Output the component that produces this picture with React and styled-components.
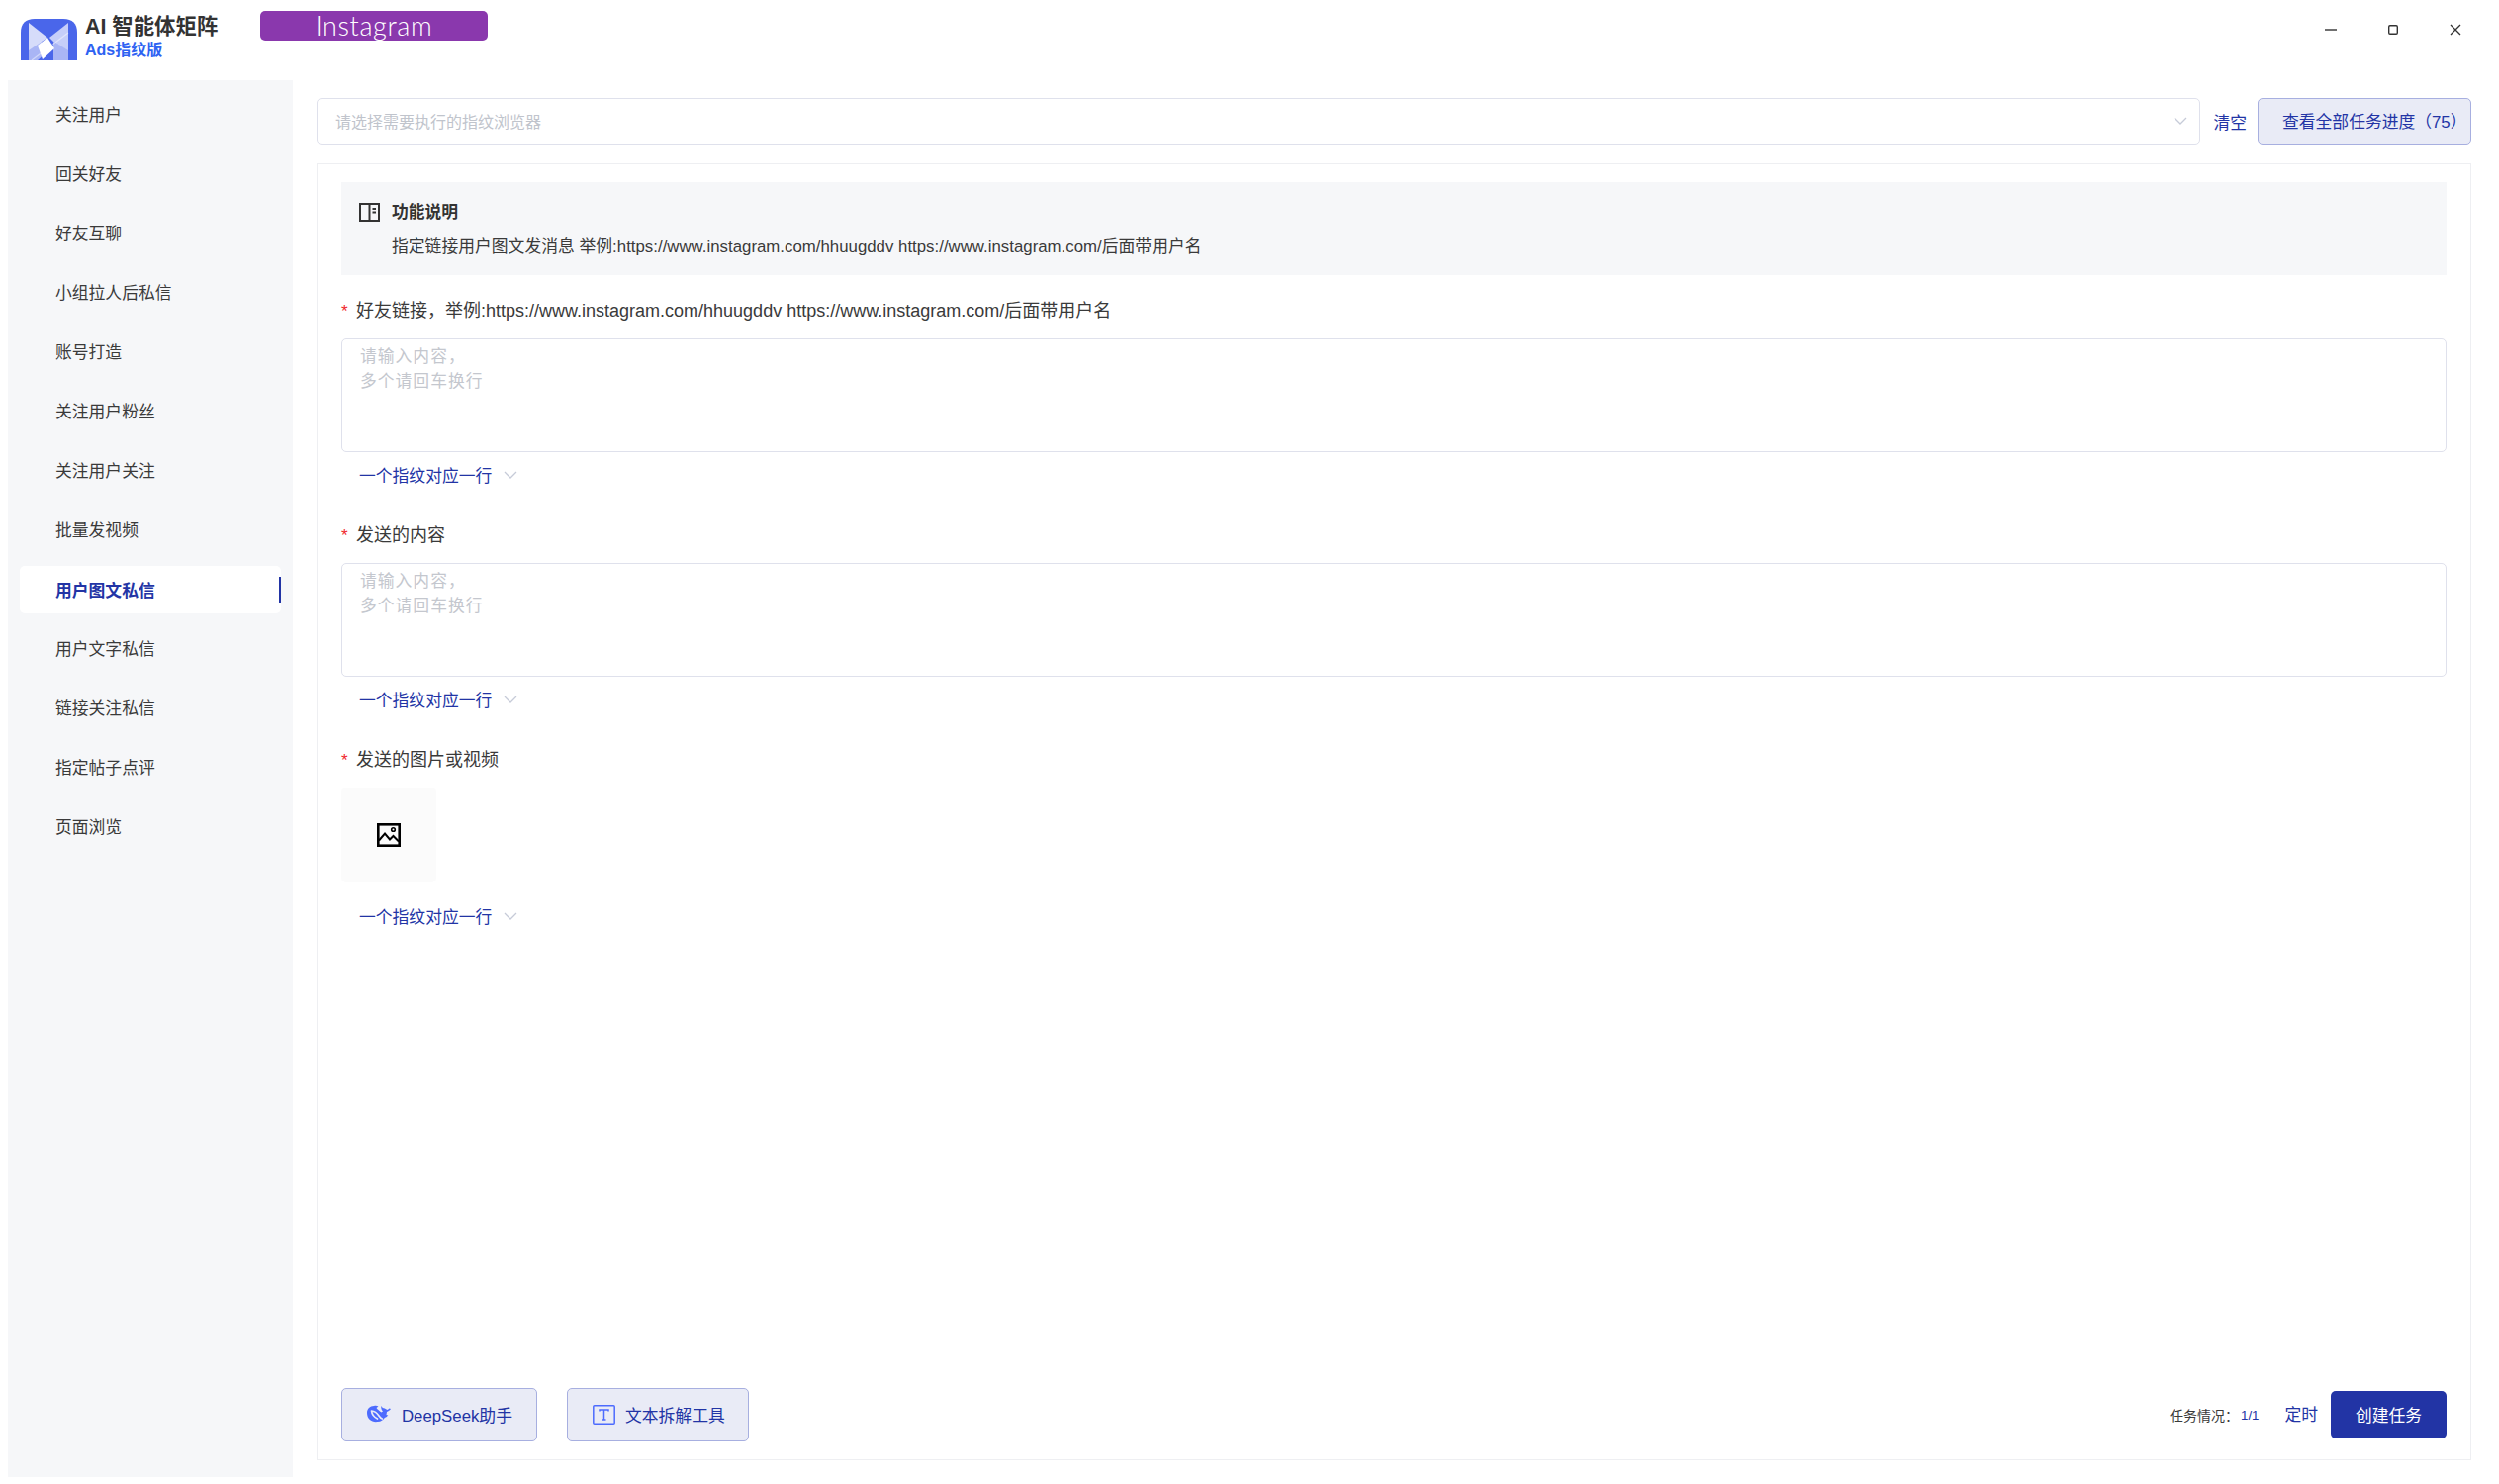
import React from "react";
import styled, { createGlobalStyle } from "styled-components";

const FONT = `"Liberation Sans", "Noto Sans CJK SC", sans-serif`;
const BLUE = "#2234a5";

const Global = createGlobalStyle`
  html, body { margin: 0; padding: 0; background: #fff; }
  * { box-sizing: border-box; }
  body { font-family: ${FONT}; color: #3a3a3a; }
`;

const Page = styled.div`
  width: 2526px; height: 1500px; overflow: hidden; display: flex; flex-direction: column; background: #fff;
`;
const Header = styled.header`
  height: 81px; flex: none; display: flex; align-items: flex-start;
`;
const Brand = styled.div`
  margin: 12px 0 0 21px; width: 242px; display: flex; gap: 8px; height: 49px; overflow: hidden;
`;
const LogoBox = styled.div`
  width: 57px; height: 49px; padding-top: 7px; flex: none; overflow: hidden;
`;
const BrandText = styled.div`
  display: flex; flex-direction: column;
`;
const BrandTitle = styled.div`
  font-size: 21.4px; font-weight: 700; line-height: 28px; color: #333; margin-top: 1px; white-space: nowrap;
`;
const BrandSub = styled.div`
  font-size: 16px; font-weight: 700; line-height: 19px; color: #2e62f2; white-space: nowrap;
`;
const PlatformBadge = styled.div`
  margin-top: 11px; width: 230px; height: 30px; border-radius: 5px; background: #8a38ad; color: #fff;
  font-family: "Lato", sans-serif; font-weight: 300; font-size: 27px; line-height: 29px; text-align: center; letter-spacing: .6px;
`;
const WindowControls = styled.div`
  margin-left: auto; margin-right: 38px; margin-top: 24px; display: flex; align-items: center; gap: 51px; color: #333;
`;
const WinIcon = styled.svg`
  width: 12px; height: 12px; display: block; fill: none; stroke: #333; stroke-width: 1.4;
`;
const Body = styled.div`
  flex: 1; display: flex; min-height: 0;
`;
const Sidebar = styled.nav`
  margin: 0 0 7px 8px; width: 288px; flex: none; background: #f6f7f9; padding: 10px 12px 0; display: flex; flex-direction: column; gap: 12px;
`;
const NavItem = styled.div`
  position: relative; height: 48px; padding-left: 36px; display: flex; align-items: center; font-size: 16.8px;
  border-radius: 5px; color: ${p => (p.$active ? BLUE : "#3a3a3a")}; font-weight: ${p => (p.$active ? 700 : 400)};
  background: ${p => (p.$active ? "#fff" : "transparent")};
  ${p => p.$active && `margin: 1px 0 -1px; &::after { content: ""; position: absolute; right: 0; top: 11px; width: 2px; height: 26px; background: ${BLUE}; }`}
`;
const Main = styled.main`
  flex: 1; min-width: 0; padding: 18px 28px 24px 24px; display: flex; flex-direction: column; gap: 18px;
`;
const TopBar = styled.div`
  height: 48px; flex: none; display: flex; align-items: center;
`;
const SelectBox = styled.div`
  flex: 1; height: 48px; border: 1px solid #dfe1ec; border-radius: 5px; display: flex; align-items: center; justify-content: space-between;
  padding: 0 12px 3px 18px; font-size: 16px; color: #c0c4cc;
`;
const Chevron = styled.svg`
  width: 14px; height: 14px; fill: none; stroke: #c6cbd8; stroke-width: 1.3; display: block; flex: none;
`;
const ClearLink = styled.span`
  margin: 0 11px 0 13px; font-size: 16.8px; color: ${BLUE};
`;
const SoftButton = styled.div`
  height: ${p => p.$h || 48}px; width: ${p => p.$w}px; flex: none; background: #e9ebf6; border: 1px solid #a7afe0; border-radius: 5px;
  display: flex; align-items: center; padding-left: ${p => p.$pl}px; padding-bottom: ${p => p.$pb || 0}px; gap: ${p => p.$gap || 0}px; font-size: 16.8px; color: ${BLUE}; white-space: nowrap;
`;
const Card = styled.section`
  flex: 1; min-height: 0; border: 1px solid #eeeff2; padding: 18px 24px 18px 24px; display: flex; flex-direction: column;
`;
const Info = styled.div`
  height: 94px; flex: none; background: #f6f7f9; padding: 19px 18px; font-size: 16.8px;
`;
const InfoTitle = styled.div`
  display: flex; align-items: center; gap: 12px; font-weight: 700; height: 24px; line-height: 24px; color: #333;
`;
const InfoIcon = styled.svg`
  width: 21px; height: 21px; display: block; flex: none; fill: none; stroke: #333; stroke-width: 2; margin-top: -2px;
`;
const InfoText = styled.div`
  margin: 11px 0 0 33px; line-height: 24px; letter-spacing: .02px; white-space: nowrap;
`;
const Field = styled.div`
  display: flex; flex-direction: column;
`;
const Label = styled.div`
  height: 28px; margin-top: ${p => p.$top}px; display: flex; align-items: center; font-size: 18px; color: #3a3a3a; white-space: nowrap;
`;
const Star = styled.span`
  color: #f0262d; font-size: 17px; width: 15px; padding-top: 5px;
`;
const TextArea = styled.div`
  margin-top: 16px; height: 115px; border: 1px solid #dfe1ec; border-radius: 5px; padding: 5px 18px; font-size: 16.8px; line-height: 25px;
  letter-spacing: 1px; color: #c4c7ce; white-space: pre-line;
`;
const Upload = styled.div`
  margin-top: 16px; width: 96px; height: 96px; background: #fbfbfb; border-radius: 5px; display: flex; align-items: center; justify-content: center;
`;
const ModeRow = styled.div`
  margin: ${p => p.$top || 11}px 0 0 18px; height: 24px; display: flex; align-items: center; gap: 12px; font-size: 16.8px; color: ${BLUE};
`;
const Footer = styled.div`
  margin-top: auto; height: 54px; flex: none; display: flex; align-items: center;
`;
const ToolGroup = styled.div`
  display: flex; gap: 30px;
`;
const Status = styled.div`
  margin-left: auto; display: flex; align-items: center; font-size: 14px; color: #3a3a3a; white-space: nowrap; padding-top: 0;
`;
const StatusValue = styled.span`
  color: ${BLUE}; margin-left: 2px; font-size: 13.2px;
`;
const TimerLink = styled.span`
  margin: 0 13px 0 26px; font-size: 16.8px; color: ${BLUE}; padding-bottom: 2px;
`;
const CreateButton = styled.div`
  width: 117px; height: 48px; border-radius: 5px; background: ${BLUE}; color: #fff; font-size: 16.8px; padding-bottom: 1px; display: flex; align-items: center; justify-content: center;
`;

const ChevronIcon = () => (
  <Chevron viewBox="0 0 14 14"><path d="M1 4l6 6 6-6" /></Chevron>
);

const Logo = () => (
  <svg width="57" height="42" viewBox="0 0 57 42" style={{ display: "block" }}>
    <path d="M0 14 Q0 0 14 0 H43 Q57 0 57 14 V42 H0Z" fill="#4a66ea" />
    <path d="M8 29 L20 22 L27 33 L17 42 H8Z" fill="#a9b5f5" />
    <path d="M33 23 L48 31 V42 H33Z" fill="#a9b5f5" />
    <path d="M8 4 L27 19 L8 32Z" fill="#d6dcfa" />
    <path d="M48 4 L29 19 L33 23 L48 32Z" fill="#c6cef9" />
    <path d="M17 27 L27 19 L34 30 L22 41Z" fill="#ffffff" />
    <path d="M11 42 L48 14" stroke="#fff" strokeOpacity=".45" strokeWidth="1.3" />
  </svg>
);

const DeepSeekIcon = () => (
  <svg width="26" height="20" viewBox="0 0 26 20" style={{ display: "block" }}>
    <path fill="#4d6bfe" d="M1 8C1 4 4 1 8 1c2-.4 3-.2 4.500.4L10.500 3c1 1.500 3 3 5 4.500l1.500-1c-1.300-1.300-2-3-1.700-5.500l1.500 2 2 .5c1 .5 1.700 1.200 2.500 1.500.8-.2 1.500-.8 2.200-1.500l1.500.6c-.8 1.300-2.500 2.300-4 3l-.5 3c.6.300 1.200.300 1.800 0-.7 1.600-2 2.600-3.500 3-1.300 2.200-3.700 4-7 4C6 18 1 14.500 1 8z" />
    <path fill="none" stroke="#e9ebf6" strokeWidth="1.700" strokeLinecap="round" d="M5.500 6c.4 3.500 2.800 6.500 6 8M5.500 6c3 .3 5.500 2 7.500 5 1 1.500 2 2.500 3.300 3" />
  </svg>
);

const navItems = ["关注用户", "回关好友", "好友互聊", "小组拉人后私信", "账号打造", "关注用户粉丝", "关注用户关注", "批量发视频", "用户图文私信", "用户文字私信", "链接关注私信", "指定帖子点评", "页面浏览"];
const placeholder = "请输入内容，\n多个请回车换行";

export default function App() {
  return (
    <Page>
      <Global />
      <Header>
        <Brand>
          <LogoBox><Logo /></LogoBox>
          <BrandText>
            <BrandTitle>AI 智能体矩阵</BrandTitle>
            <BrandSub>Ads指纹版</BrandSub>
          </BrandText>
        </Brand>
        <PlatformBadge>Instagram</PlatformBadge>
        <WindowControls>
          <WinIcon viewBox="0 0 12 12"><path d="M0 6h12" /></WinIcon>
          <WinIcon viewBox="0 0 12 12"><rect x="1.700" y="1.700" width="8.600" height="8.600" rx="1.200" /></WinIcon>
          <WinIcon viewBox="0 0 12 12"><path d="M1 1l10 10M11 1L1 11" /></WinIcon>
        </WindowControls>
      </Header>
      <Body>
        <Sidebar>
          {navItems.map(item => (
            <NavItem key={item} $active={item === "用户图文私信"}>{item}</NavItem>
          ))}
        </Sidebar>
        <Main>
          <TopBar>
            <SelectBox>
              <span>请选择需要执行的指纹浏览器</span>
              <ChevronIcon />
            </SelectBox>
            <ClearLink>清空</ClearLink>
            <SoftButton $w={216} $pl={24} $pb={2}>查看全部任务进度（75）</SoftButton>
          </TopBar>
          <Card>
            <Info>
              <InfoTitle>
                <InfoIcon viewBox="0 0 21 21">
                  <rect x="1" y="2" width="19" height="17" />
                  <path d="M10.500 2v17M13.500 7h3.500M13.500 10.500h3.500" />
                </InfoIcon>
                功能说明
              </InfoTitle>
              <InfoText>指定链接用户图文发消息 举例:https://www.instagram.com/hhuugddv https://www.instagram.com/后面带用户名</InfoText>
            </Info>
            <Field>
              <Label $top={20}><Star>*</Star>好友链接，举例:https://www.instagram.com/hhuugddv https://www.instagram.com/后面带用户名</Label>
              <TextArea>{placeholder}</TextArea>
              <ModeRow>一个指纹对应一行<ChevronIcon /></ModeRow>
            </Field>
            <Field>
              <Label $top={33}><Star>*</Star>发送的内容</Label>
              <TextArea>{placeholder}</TextArea>
              <ModeRow>一个指纹对应一行<ChevronIcon /></ModeRow>
            </Field>
            <Field>
              <Label $top={33}><Star>*</Star>发送的图片或视频</Label>
              <Upload>
                <svg width="24" height="24" viewBox="0 0 24 24" fill="none" stroke="#000" strokeWidth="2.600" style={{ display: "block" }}>
                  <rect x="1.300" y="1.300" width="21.400" height="21.400" />
                  <path d="M2 17.500l6-7 5 6 3.500-3.500 5.500 5.500" strokeWidth="2" />
                  <circle cx="16.500" cy="6.500" r="1.800" strokeWidth="1.600" />
                </svg>
              </Upload>
              <ModeRow $top={22}>一个指纹对应一行<ChevronIcon /></ModeRow>
            </Field>
            <Footer>
              <ToolGroup>
                <SoftButton $w={198} $h={54} $pl={24} $gap={10}><DeepSeekIcon />DeepSeek助手</SoftButton>
                <SoftButton $w={184} $h={54} $pl={25} $gap={10}>
                  <svg width="23" height="20" viewBox="0 0 23 20" fill="none" stroke="#4d6bfe" strokeWidth="1.500" style={{ display: "block" }}>
                    <rect x=".8" y=".8" width="21.400" height="18.400" rx="1" />
                    <path d="M7 6.500V5h9v1.500M11.500 5v10M9.500 15h4" />
                  </svg>
                  文本拆解工具
                </SoftButton>
              </ToolGroup>
              <Status>任务情况：<StatusValue>1/1</StatusValue></Status>
              <TimerLink>定时</TimerLink>
              <CreateButton>创建任务</CreateButton>
            </Footer>
          </Card>
        </Main>
      </Body>
    </Page>
  );
}
